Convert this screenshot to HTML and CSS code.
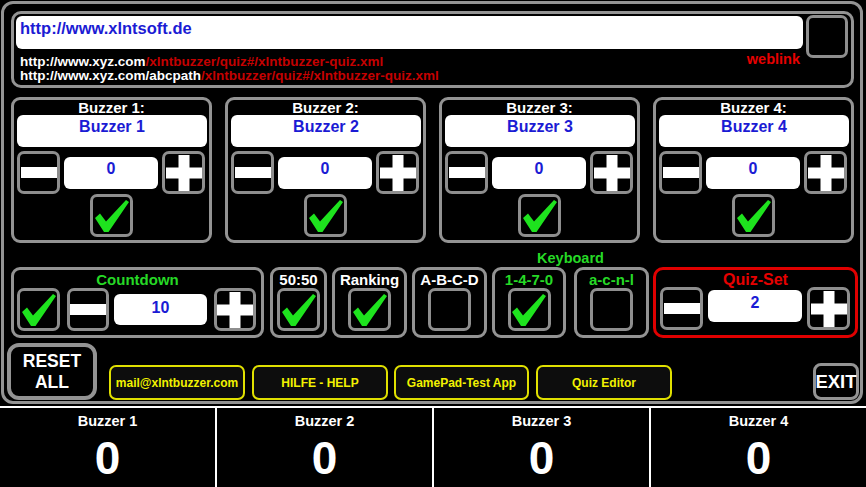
FILE: index.html
```html
<!DOCTYPE html>
<html>
<head>
<meta charset="utf-8">
<link rel="stylesheet" href="styles.css">
</head>
<body>
<svg class="defs" width="0" height="0">
  <symbol id="i-check" viewBox="0 0 34 32"><polygon points="0,18 5,13.5 11,21.5 31,0 34,2 13.5,32 9,32" fill="#1ee31e"/></symbol>
  <symbol id="i-minus" viewBox="0 0 36 11"><rect x="0" y="0" width="36" height="11" fill="#fff"/></symbol>
  <symbol id="i-plus" viewBox="0 0 36 36"><rect x="0" y="12.5" width="36" height="11" fill="#fff"/><rect x="12.5" y="0" width="11" height="36" fill="#fff"/></symbol>
</svg>
<div class="frame">
  <div class="url-panel">
    <div class="url-main">
      <div class="url-input">http://www.xlntsoft.de</div>
      <div class="url-info">
        <div class="url-lines">
          <div>http://www.xyz.com<span class="path">/xlntbuzzer/quiz#/xlntbuzzer-quiz.xml</span></div>
          <div>http://www.xyz.com/abcpath<span class="path">/xlntbuzzer/quiz#/xlntbuzzer-quiz.xml</span></div>
        </div>
        <div class="weblink">weblink</div>
      </div>
    </div>
    <div class="btn url-btn"></div>
  </div>

  <div class="buzzers">
    <div class="buzzer-panel">
      <div class="bz-title">Buzzer 1:</div>
      <div class="bz-name">Buzzer 1</div>
      <div class="bz-controls">
        <div class="btn sq"><svg class="ic-minus"><use href="#i-minus"/></svg></div>
        <div class="value">0</div>
        <div class="btn sq"><svg class="ic-plus"><use href="#i-plus"/></svg></div>
      </div>
      <div class="btn sq bz-check"><svg class="ic-check"><use href="#i-check"/></svg></div>
    </div>
    <div class="buzzer-panel">
      <div class="bz-title">Buzzer 2:</div>
      <div class="bz-name">Buzzer 2</div>
      <div class="bz-controls">
        <div class="btn sq"><svg class="ic-minus"><use href="#i-minus"/></svg></div>
        <div class="value">0</div>
        <div class="btn sq"><svg class="ic-plus"><use href="#i-plus"/></svg></div>
      </div>
      <div class="btn sq bz-check"><svg class="ic-check"><use href="#i-check"/></svg></div>
    </div>
    <div class="buzzer-panel">
      <div class="bz-title">Buzzer 3:</div>
      <div class="bz-name">Buzzer 3</div>
      <div class="bz-controls">
        <div class="btn sq"><svg class="ic-minus"><use href="#i-minus"/></svg></div>
        <div class="value">0</div>
        <div class="btn sq"><svg class="ic-plus"><use href="#i-plus"/></svg></div>
      </div>
      <div class="btn sq bz-check"><svg class="ic-check"><use href="#i-check"/></svg></div>
    </div>
    <div class="buzzer-panel">
      <div class="bz-title">Buzzer 4:</div>
      <div class="bz-name">Buzzer 4</div>
      <div class="bz-controls">
        <div class="btn sq"><svg class="ic-minus"><use href="#i-minus"/></svg></div>
        <div class="value">0</div>
        <div class="btn sq"><svg class="ic-plus"><use href="#i-plus"/></svg></div>
      </div>
      <div class="btn sq bz-check"><svg class="ic-check"><use href="#i-check"/></svg></div>
    </div>
  </div>

  <div class="options">
    <div class="opt opt-countdown">
      <div class="opt-title green">Countdown</div>
      <div class="cd-controls">
        <div class="btn sq"><svg class="ic-check"><use href="#i-check"/></svg></div>
        <div class="btn cd-btn cd-minus"><svg class="ic-minus"><use href="#i-minus"/></svg></div>
        <div class="value cd-value">10</div>
        <div class="btn cd-btn cd-plus"><svg class="ic-plus"><use href="#i-plus"/></svg></div>
      </div>
    </div>
    <div class="opt opt-5050">
      <div class="opt-title">50:50</div>
      <div class="btn sq"><svg class="ic-check"><use href="#i-check"/></svg></div>
    </div>
    <div class="opt opt-mid">
      <div class="opt-title">Ranking</div>
      <div class="btn sq"><svg class="ic-check"><use href="#i-check"/></svg></div>
    </div>
    <div class="opt opt-mid">
      <div class="opt-title">A-B-C-D</div>
      <div class="btn sq"></div>
    </div>
    <div class="kb">
      <div class="kb-label green">Keyboard</div>
      <div class="kb-row">
        <div class="opt opt-mid">
          <div class="opt-title green">1-4-7-0</div>
          <div class="btn sq"><svg class="ic-check"><use href="#i-check"/></svg></div>
        </div>
        <div class="opt opt-mid">
          <div class="opt-title green">a-c-n-l</div>
          <div class="btn sq"></div>
        </div>
      </div>
    </div>
    <div class="opt opt-quiz">
      <div class="quiz-title">Quiz-Set</div>
      <div class="quiz-controls">
        <div class="btn sq"><svg class="ic-minus"><use href="#i-minus"/></svg></div>
        <div class="value quiz-value">2</div>
        <div class="btn sq"><svg class="ic-plus"><use href="#i-plus"/></svg></div>
      </div>
    </div>
  </div>

  <div class="actions">
    <div class="reset"><span>RESET</span><span>ALL</span></div>
    <div class="ybtn ybtn-first">mail@xlntbuzzer.com</div>
    <div class="ybtn">HILFE - HELP</div>
    <div class="ybtn ybtn-narrow">GamePad-Test App</div>
    <div class="ybtn">Quiz Editor</div>
    <div class="exit">EXIT</div>
  </div>
</div>

<div class="scores">
  <div class="score"><div class="score-label">Buzzer 1</div><div class="score-val">0</div></div>
  <div class="score"><div class="score-label">Buzzer 2</div><div class="score-val">0</div></div>
  <div class="score"><div class="score-label">Buzzer 3</div><div class="score-val">0</div></div>
  <div class="score"><div class="score-label">Buzzer 4</div><div class="score-val">0</div></div>
</div>
</body>
</html>
```

FILE: styles.css
```css
* { box-sizing: border-box; }
html, body { margin: 0; padding: 0; background: #000; }
body {
  width: 866px;
  height: 487px;
  overflow: hidden;
  font-family: "Liberation Sans", Arial, sans-serif;
  font-weight: bold;
  color: #fff;
}
.defs { position: absolute; width: 0; height: 0; overflow: hidden; }

.frame {
  margin: 1px 0 0 1px;
  width: 862px;
  height: 403px;
  border: 3px solid #939393;
  border-radius: 12px;
  display: flex;
  flex-direction: column;
}

/* URL panel */
.url-panel {
  margin: 7px 0 0 7px;
  width: 843px;
  height: 77px;
  border: 3px solid #939393;
  border-radius: 10px;
  display: flex;
  align-items: flex-start;
  padding: 2px 3px 0 2px;
  gap: 3px;
}
.url-main { flex: 1; display: flex; flex-direction: column; }
.url-input {
  height: 33px;
  background: #fff;
  border-radius: 6px;
  color: #1b1bd4;
  font-size: 16.5px;
  line-height: 25.6px;
  padding-left: 4px;
}
.url-info { display: flex; justify-content: space-between; margin-top: 6px; }
.url-lines { font-size: 13.5px; line-height: 13.5px; padding-left: 4px; white-space: nowrap; }
.path { color: #c40000; }
.weblink { color: #e60000; font-size: 14.5px; line-height: 14.5px; margin-top: -3px; margin-right: 3px; }
.url-btn { width: 42px; height: 43px; margin-top: -1px; }

/* generic button */
.btn {
  border: 3px solid #8e8e8e;
  border-radius: 7px;
  background: #000;
  display: flex;
  align-items: center;
  justify-content: center;
  flex: none;
}
.sq { width: 43px; height: 43px; }
.ic-check { width: 34px; height: 32px; }
.ic-minus { width: 36px; height: 11px; }
.ic-plus { width: 36px; height: 36px; }

.value {
  background: #fff;
  border-radius: 6px;
  color: #1b1bd4;
  text-align: center;
  font-size: 16px;
  flex: none;
}

/* Buzzer panels */
.buzzers { display: flex; gap: 13px; margin: 9px 0 0 7px; }
.buzzer-panel {
  width: 201px;
  height: 146px;
  border: 3px solid #939393;
  border-radius: 9px;
  display: flex;
  flex-direction: column;
}
.bz-title { text-align: center; font-size: 15px; line-height: 15px; }
.bz-name {
  height: 32px;
  margin: 0 2px 0 3px;
  background: #fff;
  border-radius: 6px;
  color: #1b1bd4;
  text-align: center;
  font-size: 16px;
  line-height: 23px;
}
.bz-controls {
  display: flex;
  justify-content: space-between;
  align-items: center;
  margin-top: 4px;
  padding: 0 4px 0 3px;
}
.bz-controls .value { width: 94px; height: 32px; line-height: 23px; }
.bz-check { align-self: center; }

/* Options row */
.options { display: flex; align-items: flex-end; gap: 5px; margin: 7px 0 0 7px; }
.opt {
  height: 71px;
  border: 3px solid #939393;
  border-radius: 9px;
  display: flex;
  flex-direction: column;
  align-items: center;
  flex: none;
}
.opt-title {
  font-size: 15px;
  line-height: 17px;
  padding-top: 1px;
  height: 18px;
  white-space: nowrap;
}
.green { color: #26d926; }
.opt-countdown { width: 253px; align-items: stretch; }
.opt-countdown .opt-title { text-align: center; }
.cd-controls { display: flex; align-items: center; padding-left: 3px; }
.cd-btn { width: 42px; height: 43px; }
.cd-minus { margin-left: 7px; }
.cd-value { margin-left: 5px; width: 93px; height: 31px; line-height: 27px; }
.cd-plus { margin-left: 7px; }
.opt-5050 { width: 57px; margin-left: 1px; }
.opt-mid { width: 75px; }

.kb { display: flex; flex-direction: column; align-items: center; }
.kb-label { font-size: 14.5px; line-height: 17px; }
.kb-row { display: flex; gap: 8px; }
.kb-row .opt:first-child { width: 74px; }

.opt-quiz { width: 205px; border-color: #e00000; border-radius: 10px; align-items: stretch; margin-left: -1px; }
.quiz-title {
  color: #e60000;
  text-align: center;
  font-size: 16px;
  line-height: 17px;
  padding-top: 1px;
  height: 18px;
  margin-bottom: -1px;
}
.quiz-controls {
  display: flex;
  justify-content: space-between;
  align-items: flex-start;
  padding: 0 5px 0 4px;
}
.quiz-value { width: 94px; height: 32px; margin-top: 3px; line-height: 25px; }

/* Actions row */
.actions { display: flex; align-items: flex-end; margin: 5px 0 0 3px; height: 57px; }
.reset {
  width: 90px;
  height: 57px;
  border: 4px solid #939393;
  border-radius: 12px;
  display: flex;
  flex-direction: column;
  justify-content: center;
  align-items: center;
  font-size: 17.5px;
  line-height: 21px;
  padding-top: 1px;
  flex: none;
}
.ybtn {
  width: 136px;
  height: 35px;
  margin-left: 7px;
  border: 2px solid #e0e000;
  border-radius: 7px;
  background: #0d0d0d;
  color: #f2f200;
  font-size: 12px;
  display: flex;
  align-items: center;
  justify-content: center;
  white-space: nowrap;
  flex: none;
}
.ybtn-first { margin-left: 12px; }
.ybtn-narrow { width: 135px; margin-left: 6px; }
.exit {
  margin-left: auto;
  margin-right: 1px;
  width: 46px;
  height: 37px;
  border: 3px solid #939393;
  border-radius: 8px;
  font-size: 18.5px;
  line-height: 31px;
  display: flex;
  justify-content: center;
  white-space: nowrap;
  flex: none;
}

/* Scores */
.scores {
  margin-top: 2px;
  border-top: 2px solid #fff;
  background: #fff;
  display: grid;
  grid-template-columns: repeat(4, 1fr);
  column-gap: 2px;
  height: 81px;
}
.score { background: #000; display: flex; flex-direction: column; align-items: center; }
.score-label { font-size: 14.5px; line-height: 18px; padding-top: 4px; }
.score-val { font-size: 46px; line-height: 46px; margin-top: 5px; }
```
